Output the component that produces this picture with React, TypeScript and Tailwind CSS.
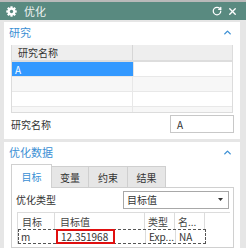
import { ChevronUp, RotateCw, X } from "lucide-react";

function Gear() {
    return (
        <svg width="11" height="11" viewBox="0 0 12 12">
            <g fill="#ffffff">
                {[0, 45, 90, 135].map((a) => (
                    <rect key={a} x="4.8" y="0.3" width="2.4" height="11.4" transform={`rotate(${a} 6 6)`} />
                ))}
                <circle cx="6" cy="6" r="4.3" />
            </g>
            <circle cx="6" cy="6" r="1.8" fill="#598a80" />
        </svg>
    );
}

function SectionTitle({ text }: { text: string }) {
    return (
        <div className="flex items-center justify-between h-[20px] pl-[5px] pr-[7px] text-[#3b8fd4] text-[11px]">
            <span>{text}</span>
            <ChevronUp size={11} strokeWidth={3} color="#3b8fd4" />
        </div>
    );
}

export default function App() {
    const tabs = ["目标", "变量", "约束", "结果"];
    const tabW = ["w-[41px]", "w-[37px]", "w-[39px]", "w-[38px]"];

    return (
        <div
            className="w-[246px] h-[248px] overflow-hidden bg-[#e6e6e6] text-[10px] text-[#333]"
            style={{ fontFamily: '"Noto Sans CJK SC", "Liberation Sans", sans-serif' }}
        >
            <div className="h-[2px] bg-[#b9b9b9]" />
            <div className="h-[18px] bg-[#598a80] flex items-center pl-[6px] pr-[8px] text-[#eef3f2]">
                <Gear />
                <span className="ml-[7px] text-[11px]">优化</span>
                <div className="ml-auto flex items-center gap-[5px]">
                    <RotateCw size={10} strokeWidth={3} color="#fff" />
                    <X size={11} strokeWidth={3} color="#fff" />
                </div>
            </div>

            {/* 研究 */}
            <div className="mt-[2px] ml-[4px] w-[236px] h-[117px] bg-white">
                <SectionTitle text="研究" />
                <div className="mt-[3px] ml-[7px] w-[222px] border border-[#dcdcdc] border-t-0">
                    <div className="flex h-[17px] bg-[#eeeeee] border-b-2 border-[#dddddd]">
                        <div className="w-[121px] border-r border-[#d6d6d6] pl-[6px] flex items-center">研究名称</div>
                        <div className="flex-1" />
                    </div>
                    <div className="flex h-[14px]">
                        <div className="w-[121px] bg-[#3399ff] text-white pl-[3px] flex items-center">A</div>
                        <div className="flex-1 border-l border-[#e4e4e4]" />
                    </div>
                    <div className="flex h-[15px] bg-[#f7f7f7] border-t border-[#e8e8e8]">
                        <div className="w-[121px] border-r border-[#e8e8e8]" />
                    </div>
                    <div className="flex h-[15px] border-t border-[#e8e8e8]">
                        <div className="w-[121px] border-r border-[#e8e8e8]" />
                    </div>
                    <div className="flex h-[6px] bg-[#f7f7f7] border-t border-[#e8e8e8]">
                        <div className="w-[121px] border-r border-[#e8e8e8]" />
                    </div>
                </div>
                <div className="flex items-center mt-[2px] h-[18px] pl-[7px] pr-[6px]">
                    <span>研究名称</span>
                    <div className="ml-auto w-[64px] h-[18px] border border-[#c8c8c8] pl-[6px] flex items-center">A</div>
                </div>
            </div>

            {/* 优化数据 */}
            <div className="mt-[3px] ml-[4px] w-[236px] h-[110px] bg-white">
                <SectionTitle text="优化数据" />
                <div className="mt-[2px] ml-[7px] w-[223px]">
                    <div className="flex items-end h-[24px]">
                        {tabs.map((t, i) =>
                            i === 0 ? (
                                <div
                                    key={t}
                                    className={`${tabW[i]} h-[24px] border border-b-0 border-[#d0d0d0] bg-white text-[#3b8fd4] flex items-center justify-center`}
                                >
                                    {t}
                                </div>
                            ) : (
                                <div
                                    key={t}
                                    className={`${tabW[i]} h-[22px] border border-l-0 border-[#cfcfcf] bg-[#e6e6e6] flex items-center justify-center`}
                                >
                                    {t}
                                </div>
                            )
                        )}
                        <div className="flex-1 border-b border-[#d0d0d0]" />
                    </div>
                    <div className="h-[60px] border border-t-0 border-[#d0d0d0] pl-[4px] pr-[4px]">
                        <div className="flex items-center h-[21px] pt-[2px]">
                            <span>优化类型</span>
                            <div className="ml-auto w-[106px] h-[18px] border border-[#a8a8a8] flex items-center pl-[3px] pr-[5px]">
                                <span>目标值</span>
                                <svg className="ml-auto" width="5" height="3" viewBox="0 0 5 3">
                                    <path d="M0 0H5L2.5 3Z" fill="#333" />
                                </svg>
                            </div>
                        </div>
                        <div className="mt-[3px] ml-[1px] w-[213px] border-l border-t border-[#dcdcdc]">
                            <div className="flex h-[16px] text-[#444]">
                                <div className="w-[37px] border-r border-[#dcdcdc] pl-[4px] flex items-center">目标</div>
                                <div className="w-[90px] border-r border-[#dcdcdc] pl-[5px] flex items-center">目标值</div>
                                <div className="w-[30px] border-r border-[#dcdcdc] pl-[3px] flex items-center">类型</div>
                                <div className="w-[30px] border-r border-[#dcdcdc] pl-[3px] flex items-center">名...</div>
                                <div className="flex-1" />
                            </div>
                            <div className="flex h-[15px]">
                                <div className="flex w-[188px] border border-dashed border-[#555]">
                                    <div className="w-[37px] pl-[2px] flex items-center">m</div>
                                    <div className="w-[59px] border-2 border-[#e01010] pl-[3px] flex items-center -my-[1px]">12.351968</div>
                                    <div className="w-[31px] border-r border-[#dcdcdc]" />
                                    <div className="w-[30px] border-r border-[#dcdcdc] pl-[3px] flex items-center">Exp...</div>
                                    <div className="flex-1 pl-[3px] flex items-center">NA</div>
                                </div>
                            </div>
                        </div>
                    </div>
                </div>
            </div>
        </div>
    );
}
